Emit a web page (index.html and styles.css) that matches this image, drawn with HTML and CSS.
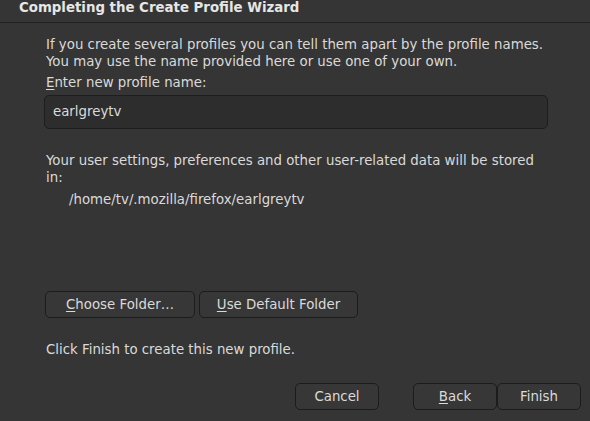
FILE: index.html
```html
<!DOCTYPE html>
<html>
<head>
<meta charset="utf-8">
<link rel="stylesheet" href="styles.css">
</head>
<body>
<div class="wizard">
  <div class="header">Completing the Create Profile Wizard</div>
  <div class="content">
    <p class="intro">If you create several profiles you can tell them apart by the profile names.<br>You may use the name provided here or use one of your own.</p>
    <label class="label"><u>E</u>nter new profile name:</label>
    <div class="input">earlgreytv</div>
    <p class="stored">Your user settings, preferences and other user-related data will be stored<br>in:</p>
    <p class="path">/home/tv/.mozilla/firefox/earlgreytv</p>
    <div class="folder-buttons">
      <div class="btn btn-choose"><u>C</u>hoose Folder…</div>
      <div class="btn btn-default"><u>U</u>se Default Folder</div>
    </div>
    <p class="finish-note">Click Finish to create this new profile.</p>
  </div>
  <div class="footer">
    <div class="btn btn-nav btn-cancel">Cancel</div>
    <div class="btn btn-nav"><u>B</u>ack</div>
    <div class="btn btn-nav">Finish</div>
  </div>
</div>
</body>
</html>
```
FILE: styles.css
```css
* { box-sizing: border-box; }
html, body {
  margin: 0;
  padding: 0;
  background: #353535;
}
body {
  width: 590px;
  height: 421px;
  overflow: hidden;
  font-family: "DejaVu Sans", sans-serif;
  font-size: 13.33px;
  color: #dadada;
}
.wizard {
  display: flex;
  flex-direction: column;
  height: 421px;
}
.header {
  height: 23px;
  padding: 0 0 0 19px;
  font-weight: bold;
  line-height: 16px;
  border-bottom: 1px solid #202020;
  color: #e6e6e6;
}
.content {
  display: flex;
  flex-direction: column;
  padding: 13px 0 0 46px;
}
p { margin: 0; }
.intro, .stored, .label, .path, .finish-note {
  line-height: 17px;
}
.label { margin-top: 4px; }
.input {
  margin: 4px 0 0 -2px;
  width: 504px;
  height: 34px;
  border: 1px solid #1e1e1e;
  border-radius: 5px;
  background: #2d2d2d;
  padding: 0 0 0 8px;
  line-height: 32px;
}
.stored { margin-top: 23px; }
.path { margin-top: 5px; padding-left: 23px; }
.folder-buttons {
  display: flex;
  gap: 4px;
  margin: 83px 0 0 -1px;
}
.btn {
  height: 27px;
  border: 1px solid #1c1c1c;
  border-radius: 5px;
  background: #373737;
  display: flex;
  align-items: center;
  justify-content: center;
  line-height: 16px;
}
.btn-choose { width: 150px; }
.btn-default { width: 159px; }
.finish-note { margin-top: 23px; }
.footer {
  display: flex;
  justify-content: flex-end;
  margin-top: 25px;
  padding-right: 9px;
}
.btn-nav { width: 84px; }
.btn-cancel { margin-right: 34px; }
u { text-decoration-thickness: 1px; text-underline-offset: 2px; }
```
